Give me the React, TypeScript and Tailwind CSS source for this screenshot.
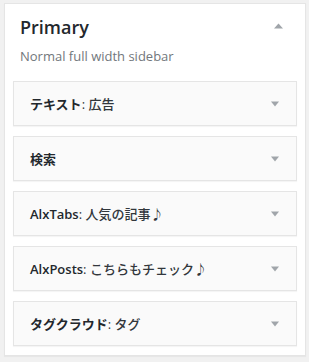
import React from "react";

const widgets: { name: string; title?: string }[] = [
  { name: "テキスト", title: "広告" },
  { name: "検索" },
  { name: "AlxTabs", title: "人気の記事♪" },
  { name: "AlxPosts", title: "こちらもチェック♪" },
  { name: "タグクラウド", title: "タグ" },
];

function Down() {
  return (
    <svg width="8" height="6" viewBox="0 0 8 6" className="block">
      <path d="M0 0.5 L8 0.5 L4 5.5 Z" fill="#a0a5aa" />
    </svg>
  );
}

function Up() {
  return (
    <svg width="9" height="6" viewBox="0 0 9 6" className="block">
      <path d="M0 5.5 L9 5.5 L4.5 0.5 Z" fill="#a0a5aa" />
    </svg>
  );
}

export default function App() {
  return (
    <div
      className="w-[309px] h-[362px] bg-[#f1f1f1] pl-[4px] pt-[3px]"
      style={{ fontFamily: '"Open Sans", "Noto Sans CJK JP", sans-serif' }}
    >
      <div className="w-[302px] h-[353px] bg-white border border-[#e5e5e5] shadow-[0_1px_1px_rgba(0,0,0,0.04)]">
        <div className="relative pl-[15px] pt-[11px]">
          <h2 className="text-[18px] leading-[24px] font-semibold text-[#23282d] m-0">Primary</h2>
          <div className="absolute right-[22px] top-[19px]">
            <Up />
          </div>
          <p className="mt-[8px] text-[13px] leading-[18px] text-[#72777c]">Normal full width sidebar</p>
        </div>
        <div className="px-[8px] pt-[16px] flex flex-col gap-[10px]">
          {widgets.map((w) => (
            <div
              key={w.name}
              className="h-[45px] bg-[#fafafa] border border-[#e5e5e5] shadow-[0_1px_1px_rgba(0,0,0,0.04)] flex items-center justify-between pl-[16px] pr-[17px]"
            >
              <div className="text-[13px] leading-[18px] text-[#23282d] whitespace-nowrap">
                <span className="font-semibold">{w.name}</span>
                {w.title && <span className="font-medium text-[#32373c]">: {w.title}</span>}
              </div>
              <Down />
            </div>
          ))}
        </div>
      </div>
    </div>
  );
}
